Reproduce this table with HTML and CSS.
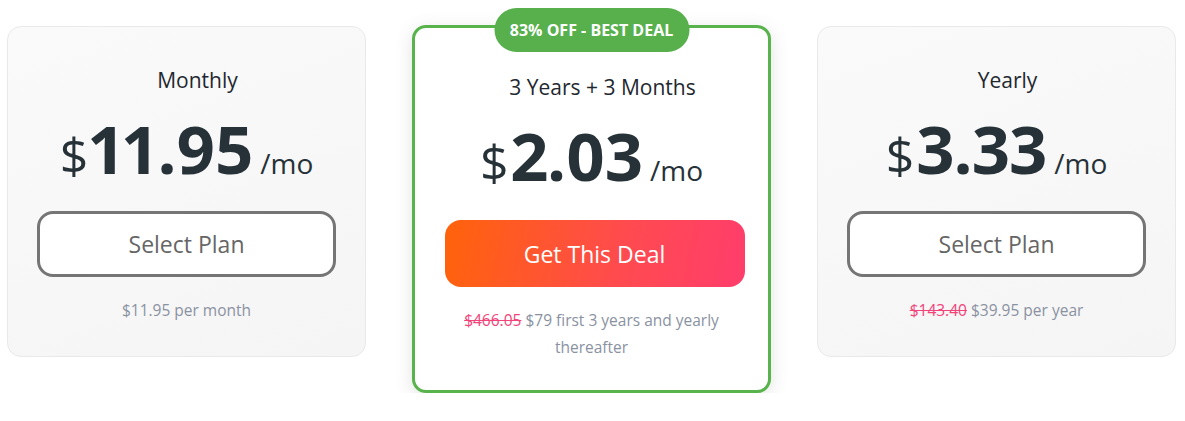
FILE: index.html
```html
<!DOCTYPE html>
<html lang="en">
<head>
<meta charset="utf-8">
<title>Plans</title>
<link rel="stylesheet" href="styles.css">
</head>
<body>
<div class="plans">
  <div class="card">
    <div class="title">Monthly</div>
    <div class="price"><span class="cur">$</span><span class="num">11.95</span><span class="per">/mo</span></div>
    <a class="btn btn-outline">Select Plan</a>
    <div class="note">$11.95 per month</div>
  </div>
  <div class="card card-best">
    <div class="badge">83% OFF - BEST DEAL</div>
    <div class="title">3 Years + 3 Months</div>
    <div class="price"><span class="cur">$</span><span class="num">2.03</span><span class="per">/mo</span></div>
    <a class="btn btn-deal">Get This Deal</a>
    <div class="note"><s class="old">$466.05</s> $79 first 3 years and yearly thereafter</div>
  </div>
  <div class="card">
    <div class="title">Yearly</div>
    <div class="price"><span class="cur">$</span><span class="num">3.33</span><span class="per">/mo</span></div>
    <a class="btn btn-outline">Select Plan</a>
    <div class="note"><s class="old">$143.40</s> $39.95 per year</div>
  </div>
</div>
</body>
</html>
```
FILE: styles.css
```css
* { box-sizing: border-box; }
body {
  margin: 0;
  background: #ffffff;
  font-family: "Open Sans", "Noto Sans", sans-serif;
  color: #222b33;
}
.plans {
  display: flex;
  align-items: flex-start;
  gap: 46px;
  padding: 25px 9px 0 7px;
}
.card {
  position: relative;
  width: 359px;
  height: 331px;
  margin-top: 1px;
  border: 1px solid #e9e9e9;
  border-radius: 14px;
  background: linear-gradient(160deg, #fafafa 0%, #f5f5f5 100%);
  display: flex;
  flex-direction: column;
  align-items: center;
  padding: 38px 30px 0;
}
.card-best {
  height: 368px;
  margin-top: 0;
  border: 3px solid #58b34c;
  background: #ffffff;
  box-shadow: 0 4px 18px rgba(60, 90, 60, 0.16);
  padding-top: 44px;
}
.badge {
  position: absolute;
  top: -20px;
  left: 50%;
  transform: translateX(-50%);
  width: 195px;
  height: 44px;
  border-radius: 22px;
  background: #57b04c;
  color: #ffffff;
  font-weight: 700;
  font-size: 16px;
  line-height: 44px;
  text-align: center;
  white-space: nowrap;
}
.title {
  font-size: 21px;
  line-height: 30px;
  padding-left: 22px;
  color: #1f2830;
}
.price {
  margin-top: 20px;
  height: 66px;
  display: flex;
  align-items: baseline;
  color: #263238;
  white-space: nowrap;
}
.cur {
  font-size: 50px;
  line-height: 1;
  margin-right: 2px;
}
.num {
  font-size: 67px;
  font-weight: 700;
  line-height: 1;
  letter-spacing: -1px;
  font-variant-numeric: proportional-nums;
}
.per {
  font-size: 28px;
  line-height: 1;
  margin-left: 8px;
}
.btn {
  margin-top: 30px;
  width: 299px;
  height: 66px;
  border-radius: 16px;
  display: flex;
  align-items: center;
  justify-content: center;
  font-size: 23px;
  cursor: pointer;
}
.btn-outline {
  border: 3px solid #757575;
  background: #ffffff;
  color: #666666;
}
.btn-deal {
  width: 300px;
  height: 67px;
  margin-top: 32px;
  margin-left: 6px;
  background: linear-gradient(100deg, #ff630a 0%, #ff4a50 60%, #ff3d6c 100%);
  color: #ffffff;
}
.note {
  margin-top: 20px;
  font-size: 15.5px;
  line-height: 27px;
  color: #8a92a2;
  text-align: center;
}
.old {
  color: #f2437a;
}
```
